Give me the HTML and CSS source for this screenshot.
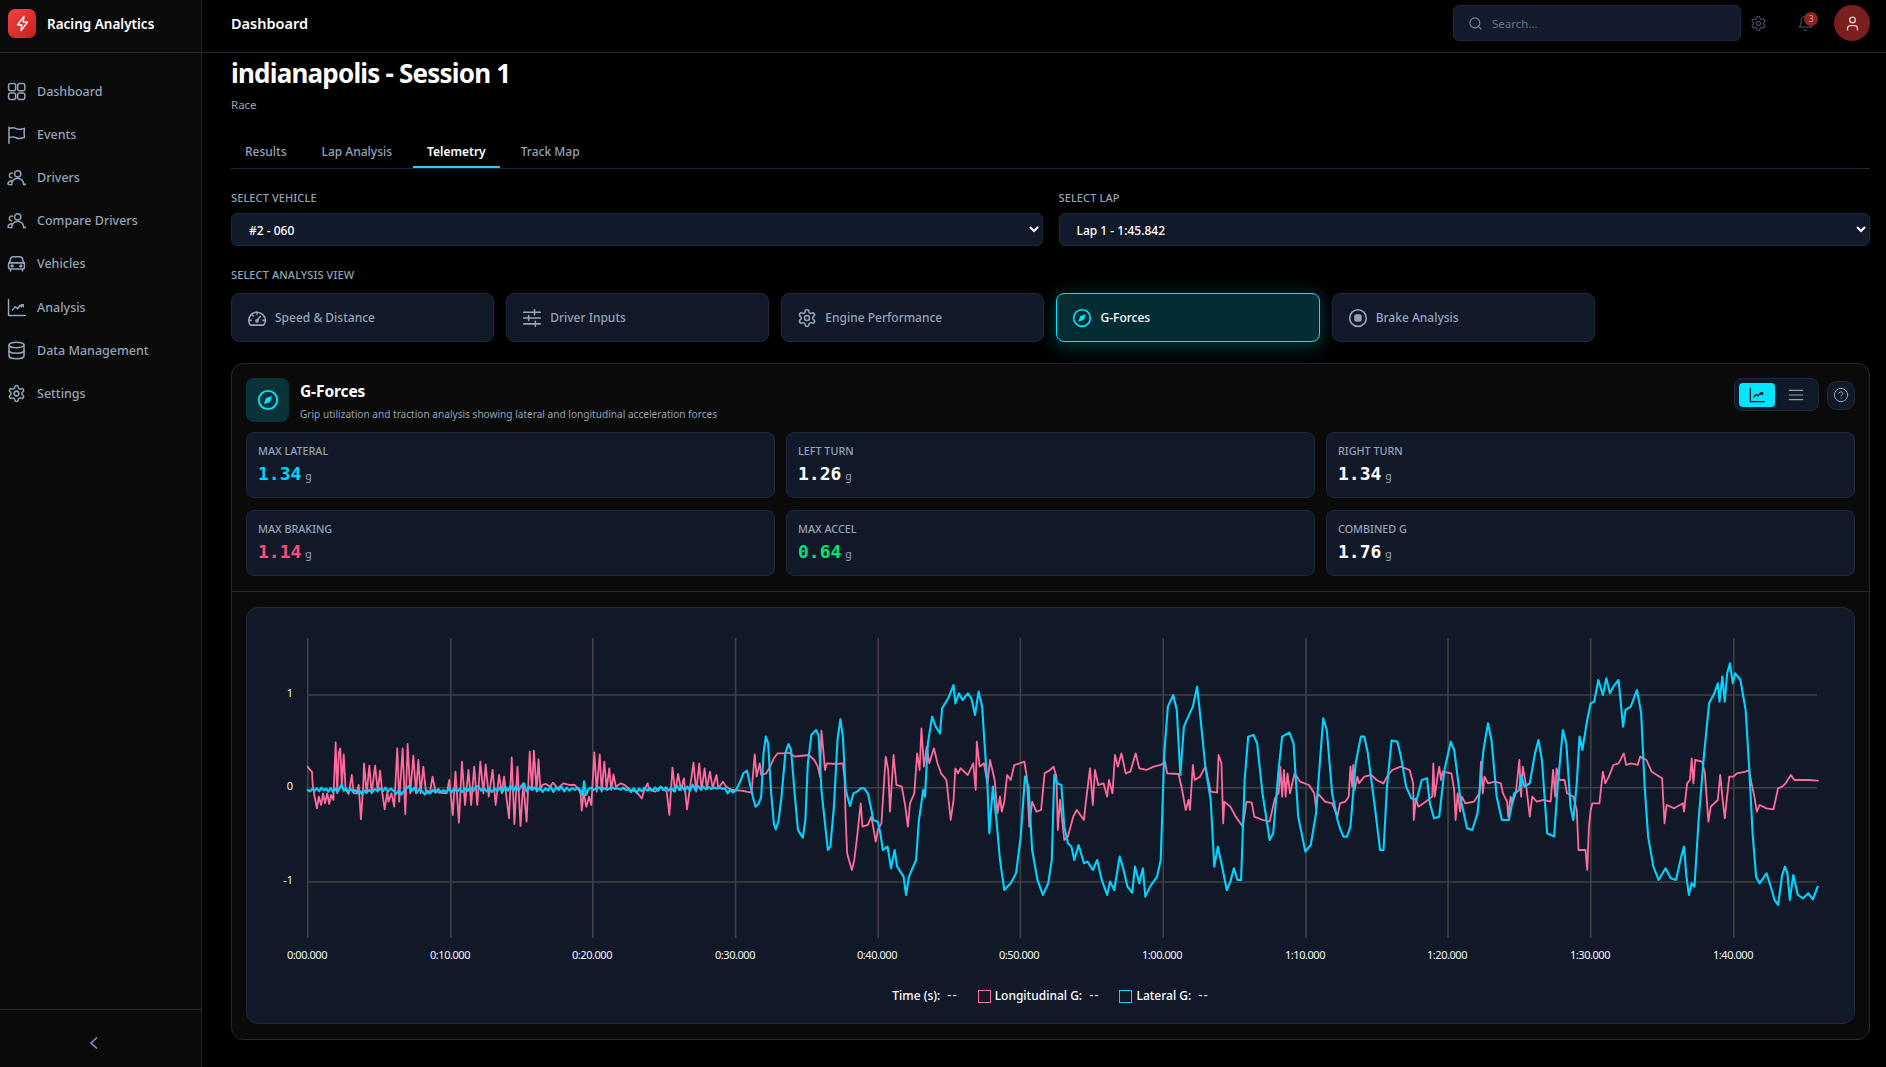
FILE: index.html
```html
<!DOCTYPE html>
<html lang="en">
<head>
<meta charset="utf-8">
<title>Racing Analytics</title>
<link rel="stylesheet" href="styles.css">
</head>
<body>
<svg class="defs" aria-hidden="true">
  <symbol id="i-grid" viewBox="0 0 24 24"><rect x="2" y="2" width="9" height="9" rx="2.5"/><rect x="13.5" y="2" width="9" height="9" rx="2.5"/><rect x="2" y="14" width="9" height="8" rx="2.5"/><rect x="13.5" y="14" width="9" height="8" rx="2.5"/></symbol>
  <symbol id="i-flag" viewBox="0 0 24 24"><path d="M2.5 3v1.5M2.5 23v-7m0 0 2.8-.7a9 9 0 0 1 6.2.7l.1.05a9 9 0 0 0 6.1.7l4.3-1a48 48 0 0 1 0-11.5l-4.3 1a9 9 0 0 1-6.1-.7l-.1-.05a9 9 0 0 0-6.2-.7L2.5 4.5M2.5 16V4.5"/></symbol>
  <symbol id="i-users" viewBox="0 0 24 24"><circle cx="13.5" cy="7.5" r="4"/><path d="M6 21v-.5a7.5 7.5 0 0 1 15 0v.5c1 .2 1.8-.1 2.5-.4M6 21c-1.600 .2-3.200 0-4.800-.7a4.500 4.500 0 0 1 4.800-4.300M6.800 6.500a3 3 0 1 0-.8 5.900"/></symbol>
  <symbol id="i-car" viewBox="0 0 24 24"><path d="M3 11l1.800-5.500A3 3 0 0 1 7.600 3.500h8.800a3 3 0 0 1 2.800 2L21 11"/><rect x="2" y="11" width="20" height="8" rx="2"/><path d="M4.500 19v2.500M19.500 19v2.500M2 11h20"/><circle cx="6.500" cy="15" r="1.200"/><circle cx="17.500" cy="15" r="1.200"/></symbol>
  <symbol id="i-chart" viewBox="0 0 24 24"><path d="M2 2v20h21"/><path d="M7 15l3.500-4 3 2.500 3-4 1.500 1.500 2-2.500"/><path d="M18 8.500h2.500V11"/></symbol>
  <symbol id="i-db" viewBox="0 0 24 24"><ellipse cx="12" cy="5" rx="9.500" ry="3.500"/><path d="M2.500 5v14c0 1.900 4.300 3.500 9.500 3.500s9.500-1.600 9.500-3.500V5"/><path d="M2.500 12c0 1.900 4.300 3.500 9.500 3.500s9.500-1.600 9.500-3.500"/></symbol>
  <symbol id="i-gear" viewBox="0 0 24 24"><path d="M12.220 2h-.44a2 2 0 0 0-2 2v.18a2 2 0 0 1-1 1.730l-.43.25a2 2 0 0 1-2 0l-.15-.08a2 2 0 0 0-2.730.73l-.22.38a2 2 0 0 0 .73 2.730l.15.1a2 2 0 0 1 1 1.720v.51a2 2 0 0 1-1 1.740l-.15.09a2 2 0 0 0-.73 2.730l.22.38a2 2 0 0 0 2.730.73l.15-.08a2 2 0 0 1 2 0l.43.25a2 2 0 0 1 1 1.730V20a2 2 0 0 0 2 2h.44a2 2 0 0 0 2-2v-.18a2 2 0 0 1 1-1.730l.43-.25a2 2 0 0 1 2 0l.15.08a2 2 0 0 0 2.730-.73l.22-.39a2 2 0 0 0-.73-2.730l-.15-.08a2 2 0 0 1-1-1.740v-.5a2 2 0 0 1 1-1.740l.15-.09a2 2 0 0 0 .73-2.730l-.22-.38a2 2 0 0 0-2.730-.73l-.15.08a2 2 0 0 1-2 0l-.43-.25a2 2 0 0 1-1-1.730V4a2 2 0 0 0-2-2z"/><circle cx="12" cy="12" r="3"/></symbol>
  <symbol id="i-gauge" viewBox="0 0 24 24"><path d="M4 20.500h16c1.300-1.600 2-3.600 2-5.700C22 9.400 17.500 5 12 5S2 9.400 2 14.800c0 2.100.7 4.100 2 5.700z"/><path d="M12 15l4-5M12 5v2.500M6 8l1.600 1.600M2.500 14.800H5M19 14.800h2.500"/><circle cx="12" cy="15.500" r="1.300"/></symbol>
  <symbol id="i-sliders" viewBox="0 0 24 24"><path d="M2 5h20M2 12h20M2 19h20M15 2v6M8 9v6M16 16v6"/></symbol>
  <symbol id="i-compass" viewBox="0 0 24 24"><circle cx="12" cy="12" r="10"/><path class="fill" d="M16.500 7.500 14.200 14.200 7.500 16.500 9.800 9.800z"/></symbol>
  <symbol id="i-brake" viewBox="0 0 24 24"><circle cx="12" cy="12" r="10"/><rect class="fill" x="7.500" y="7.500" width="9" height="9" rx="2.500"/></symbol>
  <symbol id="i-help" viewBox="0 0 24 24"><circle cx="12" cy="12" r="10"/><path d="M9.100 9a3 3 0 0 1 5.800 1c0 2-3 3-3 3M12 17h.01"/></symbol>
  <symbol id="i-menu" viewBox="0 0 24 24"><path d="M2 5h20M2 12h20M2 19h20"/></symbol>
</svg>

<div class="app">
  <aside class="sidebar">
    <div class="brand">
      <span class="logo"><svg class="logo-icon" viewBox="0 0 24 24"><path d="M14 2 5 14h6l-1 8 9-12h-6z"/></svg></span>
      <span class="brand-name">Racing Analytics</span>
    </div>
    <nav class="nav">
      <a class="nav-item"><svg class="icon nav-icon"><use href="#i-grid"/></svg>Dashboard</a>
      <a class="nav-item"><svg class="icon nav-icon"><use href="#i-flag"/></svg>Events</a>
      <a class="nav-item"><svg class="icon nav-icon"><use href="#i-users"/></svg>Drivers</a>
      <a class="nav-item"><svg class="icon nav-icon"><use href="#i-users"/></svg>Compare Drivers</a>
      <a class="nav-item"><svg class="icon nav-icon"><use href="#i-car"/></svg>Vehicles</a>
      <a class="nav-item"><svg class="icon nav-icon"><use href="#i-chart"/></svg>Analysis</a>
      <a class="nav-item"><svg class="icon nav-icon"><use href="#i-db"/></svg>Data Management</a>
      <a class="nav-item"><svg class="icon nav-icon"><use href="#i-gear"/></svg>Settings</a>
    </nav>
    <div class="side-foot"><svg class="chev" viewBox="0 0 10 14"><path d="M8 1.500 2 7l6 5.500"/></svg></div>
  </aside>

  <div class="main">
    <header class="topbar">
      <div class="page-name">Dashboard</div>
      <div class="search">
        <svg class="search-icon" viewBox="0 0 24 24"><circle cx="11" cy="11" r="8"/><path d="m21 21-4.300-4.300"/></svg>
        <span>Search...</span>
      </div>
      <svg class="icon top-gear"><use href="#i-gear"/></svg>
      <div class="bell">
        <svg class="bell-icon" viewBox="0 0 24 24"><path d="M6 8a6 6 0 0 1 12 0c0 7 3 9 3 9H3s3-2 3-9"/><path d="M10.300 21a1.940 1.940 0 0 0 3.400 0"/></svg>
        <span class="badge">3</span>
      </div>
      <div class="avatar"><svg class="avatar-icon" viewBox="0 0 24 24"><path d="M19 21v-2a4 4 0 0 0-4-4H9a4 4 0 0 0-4 4v2"/><circle cx="12" cy="7" r="4"/></svg></div>
    </header>

    <main class="content">
      <h1 class="title">indianapolis - Session 1</h1>
      <div class="subtitle">Race</div>

      <div class="tabs">
        <a class="tab">Results</a>
        <a class="tab">Lap Analysis</a>
        <a class="tab tab-active">Telemetry</a>
        <a class="tab">Track Map</a>
      </div>

      <div class="selects">
        <label class="field"><span class="label">Select Vehicle</span>
          <select class="select"><option>#2 - 060</option></select></label>
        <label class="field"><span class="label">Select Lap</span>
          <select class="select"><option>Lap 1 - 1:45.842</option></select></label>
      </div>

      <div class="label label-view">Select Analysis View</div>
      <div class="views">
        <button class="view"><svg class="icon view-icon"><use href="#i-gauge"/></svg>Speed &amp; Distance</button>
        <button class="view"><svg class="icon view-icon"><use href="#i-sliders"/></svg>Driver Inputs</button>
        <button class="view"><svg class="icon view-icon"><use href="#i-gear"/></svg>Engine Performance</button>
        <button class="view view-active"><svg class="icon view-icon"><use href="#i-compass"/></svg>G-Forces</button>
        <button class="view"><svg class="icon view-icon"><use href="#i-brake"/></svg>Brake Analysis</button>
      </div>

      <section class="panel">
        <div class="panel-top">
          <div class="panel-head">
            <div class="panel-badge"><svg class="icon badge-icon"><use href="#i-compass"/></svg></div>
            <div class="panel-text">
              <h2 class="panel-title">G-Forces</h2>
              <p class="panel-sub">Grip utilization and traction analysis showing lateral and longitudinal acceleration forces</p>
            </div>
            <div class="panel-actions">
              <div class="toggle">
                <span class="toggle-btn toggle-on"><svg class="icon toggle-icon"><use href="#i-chart"/></svg></span>
                <span class="toggle-btn"><svg class="icon toggle-icon"><use href="#i-menu"/></svg></span>
              </div>
              <span class="help"><svg class="icon help-icon"><use href="#i-help"/></svg></span>
            </div>
          </div>
          <div class="stats">
            <div class="stat"><div class="stat-label">Max Lateral</div><div class="stat-value"><b class="v-cyan">1.34</b><span class="unit">g</span></div></div>
            <div class="stat"><div class="stat-label">Left Turn</div><div class="stat-value"><b>1.26</b><span class="unit">g</span></div></div>
            <div class="stat"><div class="stat-label">Right Turn</div><div class="stat-value"><b>1.34</b><span class="unit">g</span></div></div>
            <div class="stat"><div class="stat-label">Max Braking</div><div class="stat-value"><b class="v-pink">1.14</b><span class="unit">g</span></div></div>
            <div class="stat"><div class="stat-label">Max Accel</div><div class="stat-value"><b class="v-green">0.64</b><span class="unit">g</span></div></div>
            <div class="stat"><div class="stat-label">Combined G</div><div class="stat-value"><b>1.76</b><span class="unit">g</span></div></div>
          </div>
        </div>
        <div class="panel-body">
          <div class="chart-card">
            <svg class="chart" viewBox="247 608 1607 370">
              <g class="grid">
                <path d="M308 695H1817M308 787.700H1817M308 882H1817"/>
                <path d="M307.700 638V938M450.900 638V938M592.800 638V938M735.600 638V938M878.200 638V938M1020.400 638V938M1163.200 638V938M1306 638V938M1448 638V938M1590.700 638V938M1733.800 638V938"/>
              </g>
              <g class="ylab">
                <text x="293" y="697">1</text>
                <text x="293" y="790">0</text>
                <text x="293" y="884">-1</text>
              </g>
              <g class="xlab">
                <text x="307" y="959">0:00.000</text><text x="450" y="959">0:10.000</text><text x="592" y="959">0:20.000</text><text x="735" y="959">0:30.000</text><text x="877" y="959">0:40.000</text><text x="1019" y="959">0:50.000</text><text x="1162" y="959">1:00.000</text><text x="1305" y="959">1:10.000</text><text x="1447" y="959">1:20.000</text><text x="1590" y="959">1:30.000</text><text x="1733" y="959">1:40.000</text>
              </g>
              <g class="pink">
                <polyline transform="translate(240 620) scale(.3827 .3333)" points="177,440 183,450 188,455 190,495 195,530 201,565 206,530 212,555 217,520 222,550 228,520 233,552 238,525 244,540 250,367 254,520 258,400 262,385 266,500 271,403 276,510 284,522 292,465 297,520 305,520 310,495 316,598 322,500 324,430 331,520 338,437 344,520 353,437 360,515 366,452 372,520 378,568 385,515 388,545 396,520 403,560 411,385 416,545 425,385 432,582 438,372 445,520 453,407 460,520 466,420 472,520 479,440 486,518 496,520 503,470 510,510 520,518 540,520 547,480 556,585 563,455 572,608 580,425 588,555 597,450 604,555 612,440 620,555 628,425 636,520 642,433 650,530 660,450 668,555 677,465 684,520 690,470 695,520 703,595 710,412 717,612 725,440 733,618 740,490 749,605 757,395 763,510 768,392 775,515 780,418 785,510 790,495 800,492 810,500 818,488 830,505 845,490 860,495 875,495 885,510 890,520 893,572 898,520 905,560 912,530 918,555 926,397 932,515 940,403 945,515 952,425 958,505 965,445 970,510 976,463 982,500 995,490 1005,495 1020,510 1035,515 1050,535 1055,515 1065,490 1070,510 1085,515 1100,500 1115,515 1122,585 1130,443 1137,515 1145,462 1152,510 1160,475 1168,568 1175,510 1185,428 1192,515 1200,430 1206,510 1214,445 1220,505 1228,455 1235,505 1245,465 1250,505 1262,485 1270,500 1285,510 1310,512 1337,518 1340,470 1345,403 1350,470 1358,430 1362,465 1375,460 1385,440 1395,415 1405,400 1420,400 1435,398 1450,410 1463,408"/>
                <polyline transform="translate(800 620) scale(.35714 .3333)" points="0,408 25,405 40,420 50,440 56,470 60,332 66,400 70,450 75,430 100,432 120,430 125,480 128,600 132,700 145,750 152,720 160,650 170,550 175,620 190,615 200,590 212,665 218,630 228,610 240,410 247,450 252,575 262,405 270,495 285,500 295,560 302,620 308,550 320,520 328,400 335,450 340,325 347,440 355,380 362,430 375,385 385,430 395,460 410,480 422,600 430,540 435,445 442,460 450,445 470,465 485,430 492,510 495,365 503,440 515,430 525,490 532,420 545,480 553,580 560,530 565,575 572,545 580,465 590,480 600,435 615,430 628,425 635,470 642,620 650,545 662,575 675,570 685,460 700,450 710,440 718,470 722,630 728,540 740,660 750,650 765,590 775,570 795,600 800,550 812,445 820,555 826,450 835,495 850,490 860,530 865,480 875,520 882,405 890,440 900,400 912,460 925,455 940,400 950,445 970,450 990,440 1010,435 1022,425 1028,460 1060,462 1070,510 1080,570 1088,540 1092,570 1100,435 1105,480 1120,470 1135,440 1150,515 1168,518 1172,405 1180,430 1185,610 1188,545 1205,560 1220,590 1240,620 1250,545 1265,548 1272,590 1295,600 1315,605 1330,535 1340,520 1345,440 1350,530 1355,450 1360,530 1365,460 1372,520 1385,460 1400,485 1425,495 1440,520 1445,565 1450,520 1470,545 1490,550 1505,590 1512,550"/>
                <polyline transform="translate(1340 620) scale(.34819 .3333)" points="0,550 15,545 25,530 30,440 35,500 38,435 42,510 50,470 55,490 70,470 90,465 105,480 125,490 135,470 150,450 175,440 200,450 210,490 212,600 218,535 225,560 240,550 265,530 268,430 272,530 280,470 285,440 290,480 295,455 320,460 328,510 332,600 338,520 345,575 350,530 360,550 385,545 400,520 405,425 410,520 415,470 425,490 445,485 462,490 468,520 480,545 483,590 490,530 495,550 505,520 515,420 520,530 525,440 535,500 545,590 552,530 565,545 585,540 605,545 612,450 618,530 622,445 630,480 645,480 652,520 670,530 680,570 685,690 705,690 710,750 715,620 720,570 725,550 745,550 755,455 762,490 772,470 785,435 800,430 815,400 822,435 835,430 855,435 862,410 880,420 895,455 925,475 932,610 938,555 960,565 985,550 988,575 997,490 1005,480 1010,415 1015,490 1020,420 1040,425 1048,460 1058,605 1065,560 1085,540 1092,465 1098,530 1105,595 1118,470 1130,470 1140,460 1165,455 1175,450 1182,490 1190,530 1197,575 1205,555 1225,565 1245,568 1258,505 1270,500 1280,490 1295,465 1305,480 1320,480 1345,480 1372,482"/>
              </g>
              <g class="cyan">
                <polyline transform="translate(240 620) scale(.3827 .3333)" points="177,510 183,514 189,507 195,512 201,505 207,514 213,503 219,511 225,506 231,515 237,504 243,516 249,506 255,516 261,503 266,494 271,512 277,505 283,517 289,506 295,515 301,510 307,520 313,512 319,523 325,512 331,518 337,510 345,517 352,507 359,513 366,505 373,514 380,503 387,514 394,506 401,512 408,522 415,510 422,524 429,510 436,505 442,498 448,514 455,503 462,518 469,506 476,514 483,524 490,512 497,520 504,510 511,518 518,507 525,516 532,510 539,518 546,506 553,517 560,504 567,515 574,507 581,516 588,505 595,513 602,503 609,514 616,500 623,498 630,512 637,504 644,514 651,506 658,516 665,505 672,513 679,503 686,516 693,500 700,512 707,497 714,514 721,498 728,512 735,498 742,490 749,515 756,500 763,510 770,502 777,513 784,503 791,516 798,505 805,512 812,500 819,516 826,502 833,510 840,500 847,514 854,503 861,512 868,504 875,510 882,503 889,510 895,526 899,484 904,525 910,508 917,503 924,510 931,505 938,502 945,511 952,504 959,510 966,505 973,502 980,507 987,505 994,509 1001,503 1008,510 1015,507 1022,516 1029,505 1036,518 1043,506 1050,514 1057,503 1064,512 1071,505 1078,512 1085,502 1092,513 1099,500 1106,510 1113,502 1120,512 1127,503 1134,514 1141,496 1148,510 1155,500 1162,512 1169,500 1176,512 1183,494 1190,510 1197,498 1204,509 1211,500 1218,508 1225,501 1232,507 1239,502 1246,506 1253,502 1260,507 1267,505 1274,520 1281,508 1288,518 1295,512 1305,490 1315,460 1325,452 1332,490 1340,530 1347,560 1355,552 1362,530 1368,400 1374,350 1380,370 1388,520 1395,610 1400,628 1407,605 1415,530 1425,400 1433,372 1440,390 1450,530 1458,630 1463,640"/>
                <polyline transform="translate(800 620) scale(.35714 .3333)" points="0,640 8,653 15,600 22,430 32,345 45,330 52,345 60,510 70,610 78,690 85,680 95,560 105,360 113,298 120,350 128,510 140,558 150,520 160,515 170,505 180,505 190,520 200,570 205,600 218,605 225,640 232,690 245,680 255,745 265,690 272,740 290,770 297,825 305,770 315,745 325,720 333,600 340,550 345,510 350,530 358,370 370,290 380,320 392,340 398,265 415,235 430,195 435,250 445,220 455,240 470,220 480,235 490,285 500,215 510,260 518,390 525,500 530,640 540,500 550,600 560,720 572,810 590,790 605,760 618,650 630,470 640,500 650,690 665,780 680,825 695,790 705,720 712,465 720,490 732,495 740,620 750,670 760,680 768,720 780,675 795,730 805,725 820,750 832,720 845,780 860,825 868,785 880,810 895,710 905,745 917,800 930,818 938,740 950,790 960,745 967,830 980,800 1000,770 1010,720 1020,400 1030,260 1045,225 1055,270 1065,465 1075,320 1085,295 1100,260 1112,200 1120,280 1135,440 1150,540 1160,740 1170,680 1180,730 1195,810 1205,785 1215,745 1225,780 1235,780 1245,480 1255,350 1270,345 1280,370 1295,520 1315,660 1325,640 1340,450 1350,350 1370,338 1382,370 1395,590 1415,695 1430,675 1445,580 1465,295 1475,330 1490,520 1505,600 1512,625"/>
                <polyline transform="translate(1340 620) scale(.34819 .3333)" points="0,625 10,650 20,650 30,620 45,430 60,350 70,350 80,400 100,560 115,690 125,690 135,500 148,362 165,365 175,410 190,500 205,535 220,540 235,480 250,475 258,550 270,595 285,590 300,450 318,365 328,390 345,530 365,625 380,630 395,580 412,390 425,310 435,360 450,530 465,600 485,600 500,520 515,510 520,465 530,500 545,490 560,400 570,360 580,420 595,640 615,650 625,500 640,330 650,370 662,560 670,600 680,490 688,350 696,390 710,300 720,250 730,245 742,180 755,225 765,175 775,220 785,200 800,180 813,320 820,270 835,260 853,210 865,280 875,500 885,650 900,740 915,780 935,745 950,775 965,780 980,710 988,680 995,770 1002,825 1010,790 1018,800 1030,600 1045,410 1060,250 1075,220 1085,190 1090,245 1098,170 1105,245 1112,160 1120,130 1128,190 1135,160 1150,180 1165,270 1175,440 1185,640 1195,770 1205,790 1225,760 1240,810 1248,840 1258,855 1270,765 1278,740 1285,760 1292,840 1302,765 1315,825 1330,835 1345,820 1358,838 1372,800"/>
              </g>
            </svg>
            <div class="legend">
              <span class="legend-item">Time (s):<i class="dash">--</i></span>
              <span class="legend-item"><i class="swatch swatch-pink"></i>Longitudinal G:<i class="dash">--</i></span>
              <span class="legend-item"><i class="swatch swatch-cyan"></i>Lateral G:<i class="dash">--</i></span>
            </div>
          </div>
        </div>
      </section>
    </main>
  </div>
</div>
</body>
</html>
```

FILE: styles.css
```css
* { box-sizing: border-box; }
html, body { margin: 0; height: 100%; }
body {
  background: #000;
  color: #fff;
  font-family: "Noto Sans", "Open Sans", sans-serif;
  overflow: hidden;
}
.defs { display: none; }
h1, h2, p { margin: 0; }

.icon { fill: none; stroke: currentColor; stroke-width: 1.5; stroke-linecap: round; stroke-linejoin: round; }
symbol .fill, .fill { fill: currentColor; stroke: none; }

.app { display: flex; height: 1067px; }

/* sidebar */
.sidebar { width: 202px; flex: none; display: flex; flex-direction: column; background: #0a0a0a; border-right: 1px solid #1e293b; }
.brand { height: 53px; flex: none; display: flex; align-items: center; gap: 11px; padding: 0 8px 5px; border-bottom: 1px solid #1e293b; }
.logo { width: 28px; height: 29px; border-radius: 7px; background: linear-gradient(135deg, #f04444, #c81e1e); display: flex; align-items: center; justify-content: center; }
.logo-icon { width: 17px; height: 17px; fill: none; stroke: #fff; stroke-width: 2; stroke-linejoin: round; }
.brand-name { font-size: 13.5px; font-weight: 600; white-space: nowrap; }
.nav { flex: 1; padding-top: 16.5px; display: flex; flex-direction: column; }
.nav-item { height: 43.2px; display: flex; align-items: center; gap: 11px; padding-left: 7px; color: #94a3b8; font-size: 12.5px; font-weight: 500; }
.nav-icon { width: 19px; height: 19px; flex: none; stroke-width: 1.9; }
.side-foot { height: 58px; flex: none; border-top: 1px solid #1e293b; display: flex; align-items: center; justify-content: center; padding-top: 9px; }
.chev { width: 10px; height: 14px; margin-right: 14px; fill: none; stroke: #7f9cc0; stroke-width: 1.5; }

/* top bar */
.main { flex: 1; min-width: 0; display: flex; flex-direction: column; }
.topbar { height: 53px; flex: none; display: flex; align-items: center; padding: 0 16px 6px 29px; border-bottom: 1px solid #1e293b; }
.page-name { font-size: 14.5px; font-weight: 600; flex: 1; }
.search { width: 288px; height: 36px; display: flex; align-items: center; gap: 9px; padding-left: 14px; background: #131b2c; border: 1px solid #1e293b; border-radius: 6px; color: #64748b; font-size: 11.5px; }
.search-icon { width: 15px; height: 15px; fill: none; stroke: #7c8ba1; stroke-width: 1.7; stroke-linecap: round; }
.top-gear { width: 17px; height: 17px; margin-left: 9px; color: #3f4a5a; stroke-width: 1.8; }
.bell { position: relative; width: 17px; height: 17px; margin-left: 30px; }
.bell-icon { width: 17px; height: 17px; fill: none; stroke: #3f4a5a; stroke-width: 1.8; stroke-linecap: round; stroke-linejoin: round; display: block; }
.badge { position: absolute; top: -3px; right: -4px; width: 14px; height: 14px; border-radius: 50%; background: #8f2222; color: #d99; font-size: 9px; line-height: 14px; text-align: center; }
.avatar { width: 36px; height: 36px; margin-left: 20px; border-radius: 50%; background: #7a1f1f; display: flex; align-items: center; justify-content: center; }
.avatar-icon { width: 17px; height: 17px; fill: none; stroke: #e6c4c4; stroke-width: 2; stroke-linecap: round; stroke-linejoin: round; }

/* content */
.content { flex: 1; min-height: 0; padding: 3px 16px 0 29px; display: flex; flex-direction: column; }
.title { font-size: 26px; line-height: 34px; font-weight: 700; letter-spacing: -.8px; }
.subtitle { margin-top: 6px; font-size: 11.5px; line-height: 18px; color: #94a3b8; }
.tabs { margin-top: 20px; height: 35px; display: flex; gap: 7px; border-bottom: 1px solid #1e293b; }
.tab { height: 34px; padding: 1px 14px 0; line-height: 34px; font-size: 12px; font-weight: 500; color: #94a3b8; border-bottom: 1px solid transparent; }
.tab-active { color: #fff; font-weight: 600; border-bottom: 2px solid #22d3ee; }

.selects { margin-top: 22px; display: grid; grid-template-columns: 1fr 1fr; gap: 16px; }
.field { display: block; }
.label { display: block; font-size: 11px; line-height: 14px; font-weight: 500; letter-spacing: .1px; text-transform: uppercase; color: #94a3b8; }
.select { display: block; width: 100%; height: 33px; margin-top: 8px; padding: 2px 13px 0; background: #111a2b; border: 1px solid #1e293b; border-radius: 6px; color: #fff; font: 500 12px "Noto Sans", sans-serif; color-scheme: dark; outline: none; }
.label-view { margin-top: 22px; }

.views { margin-top: 11px; display: grid; grid-template-columns: repeat(6, 1fr); gap: 12px; }
.view { height: 49px; padding: 0 15px; display: flex; align-items: center; gap: 8px; background: #111928; border: 1px solid #1e293b; border-radius: 8px; color: #94a3b8; font: 500 12px "Noto Sans", sans-serif; text-align: left; }
.view-icon { width: 20px; height: 20px; flex: none; stroke-width: 1.9; }
.view-active { background: #032d33; border-color: #00e5ff; color: #fff; box-shadow: 0 4px 18px rgba(0, 229, 255, .28); }
.view-active .view-icon { color: #00e5ff; }

/* panel */
.panel { margin-top: 21px; height: 677px; background: #0a0a0a; border: 1px solid #1e293b; border-radius: 12px; display: flex; flex-direction: column; }
.panel-top { padding: 14px 14px 15px; border-bottom: 1px solid #1e293b; }
.panel-head { display: flex; align-items: flex-start; gap: 11px; height: 44px; }
.panel-badge { width: 43px; height: 44px; flex: none; background: #0a3338; border-radius: 8px; display: flex; align-items: center; justify-content: center; }
.badge-icon { width: 22px; height: 22px; color: #00e5ff; stroke-width: 2; }
.panel-text { flex: 1; }
.panel-title { font-size: 15.5px; line-height: 20px; font-weight: 700; margin-top: 3px; letter-spacing: -.1px; }
.panel-sub { margin-top: 6px; font-size: 10.1px; line-height: 15px; color: #94a3b8; }
.panel-actions { display: flex; align-items: center; gap: 8px; }
.toggle { width: 85px; height: 33px; padding: 4px; display: flex; background: #111928; border: 1px solid #1e293b; border-radius: 8px; }
.toggle-btn { width: 36px; height: 24px; border-radius: 4px; display: flex; align-items: center; justify-content: center; color: #94a3b8; }
.toggle-btn + .toggle-btn { margin-left: 3px; }
.toggle-on { background: #00e5ff; color: #0a0a0a; }
.toggle-icon { width: 16px; height: 16px; stroke-width: 1.8; }
.help { width: 28px; height: 29px; margin-top: 1px; background: #111928; border: 1px solid #1e293b; border-radius: 10px; display: flex; align-items: center; justify-content: center; color: #94a3b8; }
.help-icon { width: 16px; height: 16px; }

.stats { margin-top: 10px; display: grid; grid-template-columns: repeat(3, 1fr); column-gap: 11px; row-gap: 12px; }
.stat { height: 66px; padding: 11px 11px 0; background: #111928; border: 1px solid #1e293b; border-radius: 8px; }
.stat-label { font-size: 10.8px; line-height: 14px; font-weight: 500; color: #94a3b8; text-transform: uppercase; }
.stat-value { margin-top: 3px; display: flex; align-items: baseline; gap: 4px; }
.stat-value b { font: 700 18px/26px "DejaVu Sans Mono", "Liberation Mono", monospace; color: #fff; }
.unit { font-size: 10.5px; color: #94a3b8; }
.v-cyan.v-cyan { color: #00d4ff; }
.v-pink.v-pink { color: #ff4d7d; }
.v-green.v-green { color: #00e676; }

.panel-body { flex: 1; padding: 15px 14px; min-height: 0; }
.chart-card { height: 100%; background: #111928; border: 1px solid #1e293b; border-radius: 12px; overflow: hidden; }
.chart { display: block; width: 1607px; height: 370px; }
.grid path { fill: none; stroke: #404040; stroke-width: 1.6; }
.ylab text { fill: #f1f5f9; font-size: 11px; text-anchor: end; }
.xlab text { fill: #f1f5f9; font-size: 11px; text-anchor: middle; letter-spacing: -.45px; }
.pink polyline, .cyan polyline { fill: none; vector-effect: non-scaling-stroke; stroke-linejoin: round; stroke-linecap: round; }
.pink polyline { stroke: #ff6b9d; stroke-width: 1.8; }
.cyan polyline { stroke: #00d4ff; stroke-width: 2.1; }

.legend { margin-top: 9px; display: flex; justify-content: center; gap: 20px; font-size: 12px; line-height: 18px; font-weight: 500; color: #fff; }
.legend-item { display: flex; align-items: center; }
.dash { margin-left: 7px; font-style: normal; font-size: 13px; letter-spacing: 1px; color: #cbd5e1; position: relative; top: -2px; }
.swatch { width: 13px; height: 13px; margin-right: 4px; border: 1px solid; }
.swatch-pink { border-color: #ff6b9d; }
.swatch-cyan { border-color: #00d4ff; }
```
